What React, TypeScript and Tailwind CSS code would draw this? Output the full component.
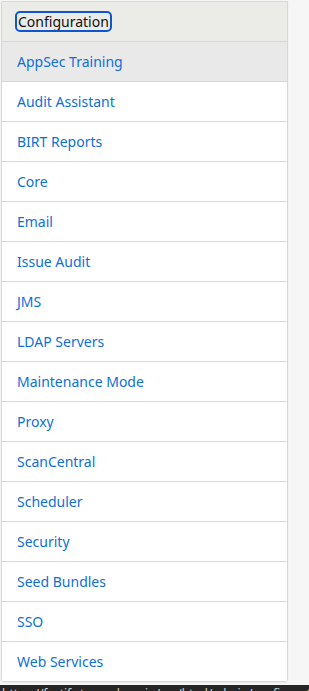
import React from "react";

const items = [
  "Audit Assistant",
  "BIRT Reports",
  "Core",
  "Email",
  "Issue Audit",
  "JMS",
  "LDAP Servers",
  "Maintenance Mode",
  "Proxy",
  "ScanCentral",
  "Scheduler",
  "Security",
  "Seed Bundles",
  "SSO",
  "Web Services",
];

export default function App() {
  return (
    <div
      className="h-[691px] w-[309px] overflow-hidden bg-[#f6f6f6] flex flex-col"
      style={{ fontFamily: '"Noto Sans", "Open Sans", sans-serif' }}
    >
      <div className="pt-px pl-px flex-1">
        <div className="w-[287px] border border-[#d8d8d8] rounded-b-[3px] bg-white shadow-[0_1px_2px_rgba(0,0,0,0.05)]">
          <div className="h-[39px] bg-[#ebebe8] flex items-center pl-[15px]">
            <span className="text-[14px] text-[#111] leading-[17px] px-px rounded-[3px] outline outline-2 outline-[#1155cc]">
              Configuration
            </span>
          </div>
          <div className="h-[40px] border-t border-[#d8d8d8] bg-[#e9e9e9] flex items-center pl-[15px] text-[14px] text-[#0f6fd8]">
            AppSec Training
          </div>
          {items.map((t) => (
            <div
              key={t}
              className="h-[40px] border-t border-[#d8d8d8] bg-white flex items-center pl-[15px] text-[14px] text-[#0f6fd8]"
            >
              {t}
            </div>
          ))}
        </div>
      </div>
      <div className="h-[6px] bg-[#262626] overflow-hidden">
        <div className="text-[12px] leading-[12px] text-[#d0d0d0] pl-[2px] pt-[3px] whitespace-nowrap">
          https://fortify.team.domain/ssc/html/admin/configuration
        </div>
      </div>
    </div>
  );
}
